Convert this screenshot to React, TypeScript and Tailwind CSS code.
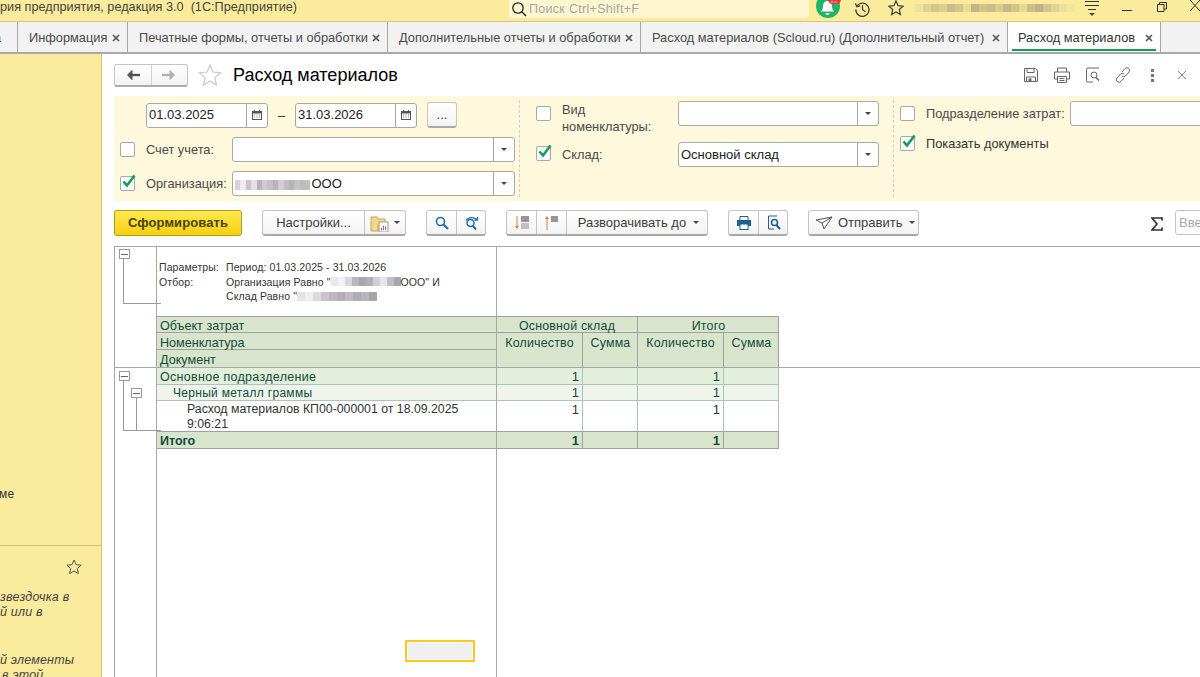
import type { ReactNode } from "react";

const font = "font-['Liberation_Sans',Arial,sans-serif]";

// pixelated patches where the reference has mosaic over names
function Mosaic({ colors, size = 5, height = 10 }: { colors: string[]; size?: number; height?: number }) {
  return (
    <span className="inline-flex align-middle">
      {colors.map((c, i) => (
        <span key={i} className="block" style={{ width: size, height, backgroundColor: c }} />
      ))}
    </span>
  );
}

function Check({ checked }: { checked?: boolean }) {
  return (
    <span className="relative block h-[15px] w-[15px] shrink-0 rounded-[2px] border border-[#a8a8a8] bg-white">
      {checked && (
        <svg viewBox="0 0 16 16" className="absolute left-[0px] top-[-4px] h-[16px] w-[16px]">
          <path d="M2.500 8.500 6 12.500 13.500 2.500" fill="none" stroke="#0f9d58" strokeWidth="2.600" />
        </svg>
      )}
    </span>
  );
}

function Caret() {
  return <span className="block h-0 w-0 border-x-[3.5px] border-t-[3.5px] border-x-transparent border-t-[#444]" />;
}

function TabClose() {
  return (
    <svg viewBox="0 0 8 8" className="mt-[4px] h-[8px] w-[8px] shrink-0">
      <path d="M1 1l6 6M7 1 1 7" stroke="#555" strokeWidth="1.700" />
    </svg>
  );
}

function Combo({ className, children }: { className: string; children?: ReactNode }) {
  return (
    <div className={`flex h-[25px] shrink-0 items-center rounded-[3px] border border-[#a8a8a8] bg-white ${className}`}>
      <div className="flex-1 overflow-hidden whitespace-nowrap pl-[2px] text-[13px] text-[#222]">{children}</div>
      <div className="flex h-full w-[21px] items-center justify-center border-l border-[#a8a8a8]">
        <Caret />
      </div>
    </div>
  );
}

function DateField({ value }: { value: string }) {
  return (
    <div className="flex h-[25px] w-[122px] shrink-0 items-center rounded-[3px] border border-[#a8a8a8] bg-white">
      <div className="flex-1 pl-[2px] text-[13px] leading-[14px] text-[#222]">{value}</div>
      <div className="flex h-full w-[21px] items-center justify-center border-l border-[#a8a8a8]">
        <svg viewBox="0 0 10 10" className="h-[10px] w-[10px]">
          <rect x="0.5" y="1.500" width="9" height="8" fill="#fff" stroke="#555" />
          <rect x="0.5" y="1.500" width="9" height="2" fill="#555" />
          <path d="M2.500 0v2M7.500 0v2" stroke="#555" />
          <path d="M2 5h1M4.500 5h1M7 5h1M2 7h1M4.500 7h1M7 7h1" stroke="#777" />
        </svg>
      </div>
    </div>
  );
}

function Btn({ className = "", children }: { className?: string; children: ReactNode }) {
  return (
    <div className={`flex h-[26px] shrink-0 items-center whitespace-nowrap rounded-[3px] border border-[#c4c4c4] border-b-[2px] border-b-[#a9a9a9] bg-gradient-to-b from-white to-[#f3f3f3] text-[13px] text-[#3c3c3c] ${className}`}>
      {children}
    </div>
  );
}

function Cell30({ children, last }: { children: ReactNode; last?: boolean }) {
  return (
    <div className={`flex h-full w-[30px] shrink-0 items-center justify-center ${last ? "" : "border-r border-[#c4c4c4]"}`}>{children}</div>
  );
}

function Minus({ className = "" }: { className?: string }) {
  return (
    <span className={`flex h-[10px] w-[11px] items-center justify-center border border-[#999] bg-white ${className}`}>
      <span className="block h-px w-[7px] bg-[#666]" />
    </span>
  );
}

const tabs = [
  { label: "Информация", width: 110 },
  { label: "Печатные формы, отчеты и обработки", width: 260 },
  { label: "Дополнительные отчеты и обработки", width: 253 },
  { label: "Расход материалов (Scloud.ru) (Дополнительный отчет)", width: 367 },
];

const blurA = ["#d8d3d8", "#f0eaec", "#c9c3cb", "#e6e0e2", "#b9b3bb", "#d0cbd0", "#c4c0c8", "#b8b4bc", "#d2ced4", "#c0bcc4", "#b4b4b8", "#c4c4c4", "#bcbcbc", "#c0c0c0"];
const blurB = ["#e8e8ea", "#f2f2f4", "#d8d8dc", "#b8b8bc", "#a8a8ae", "#b0b0b6", "#d0d0d4", "#e4e8ec", "#c0c0c4", "#a8a8ac"];
const blurC = ["#e4e4e4", "#eeeeee", "#dcdce0", "#c8c4c8", "#bcb8bc", "#b4b0b4", "#c0bcc0", "#b0acb0", "#b8b8bc", "#a8a4a8"];
const blurTop = ["#efe29a", "#e0d494", "#d2c68e", "#dccf92", "#c8bc8a", "#d2c68e", "#e8dc96", "#c2b688", "#d0c48c", "#c8bc8a", "#dacd90", "#c4b888", "#d0c48c", "#e4d894", "#cabe8a", "#bfb386", "#d2c68e", "#e0d494", "#ecdf98", "#f3e69a"];

const rows = [
  { key: "a", cls: "h-[17px] bg-[#e3eedd] leading-[18px] border-[#a9c5b8]" },
  { key: "b", cls: "h-[16px] bg-[#eff5ec] leading-[16px] border-[#a9c5b8]" },
  { key: "c", cls: "h-[31px] bg-white pt-px leading-[15px] text-[#333] border-r-[#a9c5b8] border-b-[#a0a0a0]" },
  { key: "d", cls: "h-[17px] bg-[#d8e4cc] leading-[17px] font-bold border-[#a0a0a0]" },
];

export default function App() {
  return (
    <div className={`relative flex h-[677px] w-[1200px] flex-col overflow-hidden bg-white ${font}`}>
      {/* title bar */}
      <div className="flex h-[22px] shrink-0 items-start border-b border-[#d9c677] bg-[#fbeb9c]">
        <div className="w-[509px] shrink-0 whitespace-pre text-[12.7px] leading-[15px] text-[#444]">
          {"рия предприятия, редакция 3.0  (1С:Предприятие)"}
        </div>
        <div className="flex h-[18px] w-[300px] shrink-0 items-center rounded-br-[4px] bg-[#fdf6cf] pl-[2px]">
          <svg viewBox="0 0 16 16" className="h-[16px] w-[16px]">
            <circle cx="7" cy="7" r="5.200" fill="none" stroke="#222" strokeWidth="1.300" />
            <path d="M11 11l4 4" stroke="#222" strokeWidth="1.500" />
          </svg>
          <span className="pl-[2px] text-[12.5px] tracking-[0.3px] text-[#a6a6a6]">Поиск Ctrl+Shift+F</span>
        </div>
        <div className="ml-[7px] h-[21px] w-[26px] shrink-0">
          <svg viewBox="0 0 26 21" className="h-[21px] w-[26px]">
            <circle cx="12" cy="6" r="12" fill="#22b268" />
            <path d="M11.500 1c3 0 4.500 2.500 4.500 5.500 0 2.500 1 3.500 2 5H5c1-1.500 2-2.500 2-5C7 3.500 8.500 1 11.500 1Z" fill="#fff" />
            <path d="M9.500 13h4a2 2 0 0 1-4 0Z" fill="#fff" />
            <rect x="12" y="-5" width="13" height="9" rx="4.500" fill="#e53935" />
            <path d="M15 2h2M18.500 2h2" stroke="#fff" strokeWidth="1.200" />
          </svg>
        </div>
        <div className="ml-[12px] flex h-[18px] shrink-0 items-center">
          <svg viewBox="0 0 18 18" className="h-[17px] w-[17px]">
            <path d="M3.500 5A7 7 0 1 1 2 9" fill="none" stroke="#3c3c3c" strokeWidth="1.300" />
            <path d="M1.500 2.500 3 6l3.500-.8" fill="none" stroke="#3c3c3c" strokeWidth="1.300" />
            <path d="M9 4.500V9l3 2.500" fill="none" stroke="#3c3c3c" strokeWidth="1.300" />
          </svg>
        </div>
        <div className="ml-[17px] flex h-[16px] shrink-0 items-center">
          <svg viewBox="0 0 16 16" className="h-[16px] w-[16px]">
            <path d="M8 1l2.100 4.700 5 .5-3.800 3.300 1.100 5L8 12l-4.400 2.500 1.100-5L.9 6.200l5-.5Z" fill="none" stroke="#3c3c3c" strokeWidth="1.200" />
          </svg>
        </div>
        <div className="ml-[11px] mt-[4px] flex shrink-0">
          <Mosaic colors={blurTop} size={8} height={8} />
        </div>
        <div className="ml-[10px] flex w-[14px] shrink-0 flex-col items-center gap-[3px] pt-[1px]">
          <span className="block h-px w-[14px] bg-[#333]" />
          <span className="block h-px w-[14px] bg-[#333]" />
          <span className="block h-px w-[8px] bg-[#333]" />
          <Caret />
        </div>
        <div className="ml-[23px] mt-[10px] h-px w-[10px] shrink-0 bg-[#333]" />
        <div className="ml-[25px] mt-[2px] h-[10px] w-[10px] shrink-0">
          <svg viewBox="0 0 10 10" className="h-[10px] w-[10px]">
            <path d="M2.500 2.500V.5h7v6.500H7M.5 2.500h6.500v7H.5Z" fill="none" stroke="#333" />
          </svg>
        </div>
        <div className="ml-[22px] h-[12px] w-[12px] shrink-0">
          <svg viewBox="0 0 12 12" className="h-[12px] w-[12px]">
            <path d="M1 0l10 11M11 0 1 11" stroke="#333" />
          </svg>
        </div>
      </div>

      {/* tabs */}
      <div className="flex h-[32px] shrink-0 border-b-2 border-[#a8a8a8] bg-[#f2f2f2] text-[12.8px] text-[#4a4a4a]">
        <div className="w-[18px] shrink-0 border-r border-[#a8a8a8] pt-[8px] leading-[15px]">
          <span className="ml-[-6px]">а</span>
        </div>
        {tabs.map((t) => (
          <div
            key={t.label}
            className="flex shrink-0 items-start justify-between whitespace-nowrap border-r border-[#a8a8a8] pl-[11px] pr-[7px] pt-[8px] leading-[15px]"
            style={{ width: t.width }}
          >
            <span>{t.label}</span>
            <TabClose />
          </div>
        ))}
        <div className="flex w-[153px] shrink-0 flex-col whitespace-nowrap border-r border-[#a8a8a8] bg-white pt-[8px] leading-[15px]">
          <div className="flex justify-between pl-[10px] pr-[7px] text-[#333]">
            <span>Расход материалов</span>
            <TabClose />
          </div>
          <div className="mx-[4px] mt-[4px] h-[2px] bg-[#0f9d58]" />
        </div>
      </div>

      <div className="flex min-h-0 flex-1">
        {/* side panel */}
        <aside className="flex w-[102px] shrink-0 flex-col overflow-hidden border-r border-[#d9c677] bg-[#fbeb9c] text-[12px] text-[#444]">
          <div className="h-[492px] shrink-0 border-b border-[#d0c27a] pt-[431px]">
            <span className="ml-[-1px] tracking-[0.3px] text-[#333]">ме</span>
          </div>
          <div className="flex justify-end pr-[19px] pt-[13px]">
            <svg viewBox="0 0 16 16" className="h-[16px] w-[16px]">
              <path d="M8 1l2.100 4.700 5 .5-3.800 3.300 1.100 5L8 12l-4.400 2.500 1.100-5L.9 6.200l5-.5Z" fill="none" stroke="#555" strokeWidth="1" />
            </svg>
          </div>
          <div className="whitespace-nowrap pt-[15px] text-[12.5px] italic leading-[15px] tracking-[0.2px]">
            <p>звездочка в</p>
            <p>й или в</p>
            <p className="pt-[33px]">й элементы</p>
            <p className="pl-[2px]">в этой</p>
          </div>
        </aside>

        <main className="flex min-w-0 flex-1 flex-col pl-[12px] text-[#222]">
          {/* form header */}
          <div className="flex h-[42px] shrink-0 items-center">
            <div className="flex h-[23px] w-[74px] shrink-0 rounded-[3px] border border-[#c4c4c4] border-b-[2px] border-b-[#a9a9a9] bg-gradient-to-b from-white to-[#f3f3f3]">
              <div className="flex flex-1 items-center justify-center border-r border-[#d0d0d0]">
                <svg viewBox="0 0 14 10" className="h-[10px] w-[14px]">
                  <path d="M6 .5 1.500 5 6 9.500Z" fill="#555" stroke="#555" />
                  <path d="M3 5h11" fill="none" stroke="#555" strokeWidth="2.400" />
                </svg>
              </div>
              <div className="flex flex-1 items-center justify-center">
                <svg viewBox="0 0 14 10" className="h-[10px] w-[14px]">
                  <path d="M8 .5 12.500 5 8 9.500Z" fill="#b0b0b0" stroke="#b0b0b0" />
                  <path d="M0 5h11" fill="none" stroke="#b0b0b0" strokeWidth="2.400" />
                </svg>
              </div>
            </div>
            <svg viewBox="0 0 24 24" className="ml-[10px] h-[24px] w-[24px] shrink-0">
              <path d="M12 2l3 7 7.500.7-5.700 4.900 1.700 7.300L12 18l-6.500 3.900 1.700-7.300L1.500 9.700 9 9Z" fill="none" stroke="#c8c8c8" strokeWidth="1.200" />
            </svg>
            <h1 className="ml-[11px] text-[18px] leading-none text-black">Расход материалов</h1>
            <div className="ml-auto flex items-center gap-[14px] pr-[14px]">
              <svg viewBox="0 0 16 16" className="h-[16px] w-[16px]">
                <path d="M1.500 1.500h11l2 2v11h-13Z" fill="none" stroke="#666" />
                <path d="M4 1.500v4h7v-4M3.500 15V10h9v5" fill="none" stroke="#666" />
                <rect x="5.500" y="11.500" width="3" height="3" fill="#666" />
              </svg>
              <svg viewBox="0 0 18 16" className="h-[16px] w-[18px]">
                <path d="M4.500 5V1h9v4M4.500 12H1.500V5h15v7h-3" fill="none" stroke="#666" />
                <path d="M4.500 9.500h9v6h-9ZM6.500 11.500h5M6.500 13.500h5" fill="none" stroke="#666" />
              </svg>
              <svg viewBox="0 0 16 16" className="h-[16px] w-[16px]">
                <path d="M14 1H3a1.500 1.500 0 0 0-1.500 1.500v11A1.500 1.500 0 0 0 3 15h5" fill="none" stroke="#666" />
                <circle cx="9" cy="8" r="3" fill="none" stroke="#666" />
                <path d="M11 10.500l3 3" stroke="#666" strokeWidth="1.500" />
              </svg>
              <svg viewBox="0 0 16 16" className="h-[16px] w-[16px]">
                <path d="M7 5l3-3.300a2.500 2.500 0 0 1 4 3.300l-3.500 4a2.500 2.500 0 0 1-3.500 0M9 11l-3 3.300a2.500 2.500 0 0 1-4-3.300l3.500-4a2.500 2.500 0 0 1 3.500 0" fill="none" stroke="#666" />
              </svg>
              <div className="ml-[4px] flex w-[6px] flex-col items-center gap-[2px]">
                <span className="block h-[3px] w-[3px] bg-[#777]" />
                <span className="block h-[3px] w-[3px] bg-[#777]" />
                <span className="block h-[3px] w-[3px] bg-[#777]" />
              </div>
              <svg viewBox="0 0 10 10" className="ml-[9px] h-[8px] w-[8px]">
                <path d="M0 0l10 10M10 0 0 10" stroke="#666" />
              </svg>
            </div>
          </div>

          {/* filter panel */}
          <div className="flex h-[105px] shrink-0 bg-[#fef8dc] text-[12.8px] leading-[15px] text-[#4a4a4a]">
            <div className="flex w-[405px] shrink-0 flex-col pl-[6px] pt-[6px]">
              <div className="flex items-center pl-[26px]">
                <DateField value="01.03.2025" />
                <span className="w-[27px] text-center text-[#333]">–</span>
                <DateField value="31.03.2026" />
                <Btn className="ml-[10px] w-[30px] justify-center leading-none">...</Btn>
              </div>
              <div className="mt-[9px] flex items-center">
                <Check />
                <span className="ml-[11px] w-[86px] shrink-0">Счет учета:</span>
                <Combo className="w-[283px]" />
              </div>
              <div className="mt-[9px] flex items-center">
                <Check checked />
                <span className="ml-[11px] w-[86px] shrink-0">Организация:</span>
                <Combo className="w-[283px]">
                  <Mosaic colors={blurA} size={5.4} />
                  <span className="ml-[1px]">ООО</span>
                </Combo>
              </div>
            </div>
            <div className="my-[4px] border-l border-dashed border-[#cfcfcf]" />
            <div className="flex w-[373px] shrink-0 flex-col pl-[16px] pt-[5px]">
              <div className="flex items-start">
                <span className="mt-[5px]"><Check /></span>
                <span className="ml-[11px] w-[116px] shrink-0 leading-[17px]">Вид номенклатуры:</span>
                <Combo className="w-[201px]" />
              </div>
              <div className="mt-[7px] flex items-center">
                <span className="mt-[-2px]"><Check checked /></span>
                <span className="ml-[11px] w-[116px] shrink-0">Склад:</span>
                <Combo className="w-[201px]">Основной склад</Combo>
              </div>
            </div>
            <div className="my-[4px] border-l border-dashed border-[#cfcfcf]" />
            <div className="flex flex-1 flex-col overflow-hidden pl-[6px] pt-[5px]">
              <div className="flex items-center whitespace-nowrap">
                <Check />
                <span className="ml-[11px] w-[144px] shrink-0">Подразделение затрат:</span>
                <div className="h-[25px] w-[140px] shrink-0 rounded-[3px] border border-[#a8a8a8] bg-white" />
              </div>
              <div className="mt-[10px] flex items-center">
                <Check checked />
                <span className="ml-[11px] text-[#333]">Показать документы</span>
              </div>
            </div>
          </div>

          {/* report toolbar */}
          <div className="flex h-[45px] shrink-0 items-start overflow-hidden pt-[9px]">
            <div className="flex h-[26px] w-[128px] shrink-0 items-center justify-center rounded-[3px] border border-[#b49b12] bg-gradient-to-b from-[#ffe94d] to-[#f6d000] text-[13px] font-bold tracking-[0.1px] text-[#4a4200]">
              Сформировать
            </div>
            <Btn className="ml-[20px] w-[144px]">
              <div className="flex h-full w-[102px] items-center justify-center border-r border-[#c4c4c4] pt-px">Настройки...</div>
              <div className="flex flex-1 items-center justify-center gap-[4px]">
                <svg viewBox="0 0 20 18" className="h-[18px] w-[20px]">
                  <path d="M1 3h6l1 2h7v6H8v6H1Z" fill="#f5d98a" stroke="#c9a24a" />
                  <rect x="9" y="8" width="9" height="10" fill="#fff" stroke="#999" />
                  <path d="M11.500 16v-2M13.500 16v-4M15.500 16v-3" stroke="#d4553a" />
                </svg>
                <Caret />
              </div>
            </Btn>
            <Btn className="ml-[20px] w-[60px]">
              <Cell30>
                <svg viewBox="0 0 14 14" className="h-[14px] w-[14px]">
                  <circle cx="5.500" cy="5.500" r="4" fill="none" stroke="#1f6fa8" strokeWidth="1.600" />
                  <path d="M8.500 8.500 13 13" stroke="#1f6fa8" strokeWidth="2.200" />
                </svg>
              </Cell30>
              <Cell30 last>
                <svg viewBox="0 0 16 14" className="h-[14px] w-[16px]">
                  <circle cx="6.500" cy="7" r="3.500" fill="none" stroke="#1f6fa8" strokeWidth="1.500" />
                  <path d="M9 10l3 3.500" stroke="#1f6fa8" strokeWidth="2" />
                  <path d="M2 4.500C4 1 9 .5 13 3.500M13.500 1v3h-3" fill="none" stroke="#1f6fa8" strokeWidth="1.300" />
                </svg>
              </Cell30>
            </Btn>
            <Btn className="ml-[20px] w-[202px]">
              <Cell30>
                <svg viewBox="0 0 16 16" className="h-[16px] w-[16px]">
                  <path d="M3 1v12" stroke="#e57b3a" />
                  <path d="M1 11l2 3 2-3Z" fill="#e57b3a" />
                  <path d="M7 2h8M7 4h8M7 6h8" stroke="#333" />
                  <path d="M7 9h8M7 11h8M7 13h8" stroke="#888" />
                </svg>
              </Cell30>
              <Cell30>
                <svg viewBox="0 0 16 16" className="h-[16px] w-[16px]">
                  <path d="M3 3v12" stroke="#e57b3a" />
                  <path d="M1 4l2-3 2 3Z" fill="#e57b3a" />
                  <path d="M7 2h7M7 4h7M7 6h7" stroke="#333" />
                </svg>
              </Cell30>
              <div className="flex flex-1 items-center justify-center gap-[7px] pl-[3px]">
                <span className="pt-px">Разворачивать до</span>
                <Caret />
              </div>
            </Btn>
            <Btn className="ml-[20px] w-[60px]">
              <Cell30>
                <svg viewBox="0 0 16 14" className="h-[14px] w-[16px]">
                  <path d="M4 4V.5h8V4" fill="none" stroke="#1f5f8f" />
                  <rect x="1" y="4" width="14" height="6" fill="#1f5f8f" />
                  <rect x="4" y="8" width="8" height="5.500" fill="#fff" stroke="#1f5f8f" />
                </svg>
              </Cell30>
              <Cell30 last>
                <svg viewBox="0 0 14 15" className="h-[15px] w-[14px]">
                  <path d="M10 1H1.500v13H7" fill="none" stroke="#1f5f8f" />
                  <circle cx="7.500" cy="7.500" r="3" fill="none" stroke="#1f5f8f" strokeWidth="1.600" />
                  <path d="M9.500 10l3.500 4" stroke="#1f5f8f" strokeWidth="2" />
                </svg>
              </Cell30>
            </Btn>
            <Btn className="ml-[20px] w-[111px] pl-[6px]">
              <svg viewBox="0 0 18 14" className="h-[14px] w-[18px]">
                <path d="M1 4 17 1 9 13 7 7Zm6 3 10-6" fill="none" stroke="#555" />
              </svg>
              <span className="ml-[5px] pt-px">Отправить</span>
              <span className="ml-[7px]"><Caret /></span>
            </Btn>
            <svg viewBox="0 0 12 14" className="ml-[232px] mt-[7px] h-[14px] w-[12px] shrink-0">
              <path d="M11 3.500V1H1l5 6-5 6h10v-2.500" fill="none" stroke="#333" strokeWidth="1.700" />
            </svg>
            <div className="ml-[12px] h-[25px] w-[60px] shrink-0 rounded-[3px] border border-[#c4c4c4] pl-[3px] text-[13px] leading-[23px] text-[#aaa]">
              Введите
            </div>
          </div>

          {/* report: frozen panes */}
          <div className="flex min-h-0 flex-1 flex-col border-l border-t border-[#a8a8a8]">
            <div className="flex h-[121px] shrink-0 border-b border-[#a8a8a8]">
              <div className="flex w-[382px] shrink-0 border-r border-[#a8a8a8]">
                <div className="w-[42px] shrink-0 border-r border-[#a8a8a8] pl-[4px] pt-[2px]">
                  <Minus />
                  <div className="ml-[4px] h-[45px] w-[38px] border-b border-l border-[#999]" />
                </div>
                <div className="flex-1">
                  <div className="h-[69px] pt-[13px] text-[10.5px] leading-[14.5px] tracking-[0.1px] text-[#333]">
                    <div className="flex pl-[2px]">
                      <span className="w-[67px]">Параметры:</span>
                      <span>Период: 01.03.2025 - 31.03.2026</span>
                    </div>
                    <div className="flex pl-[2px]">
                      <span className="w-[67px]">Отбор:</span>
                      <div>
                        <div className="flex items-center">
                          Организация Равно "<Mosaic colors={blurB} size={7} height={9} />ООО" И
                        </div>
                        <div className="flex items-center">
                          Склад Равно "<Mosaic colors={blurC} size={8} height={9} />
                        </div>
                      </div>
                    </div>
                  </div>
                  <div className="text-[12.6px] text-[#0f4c3a]">
                    <div className="h-[17px] border-y border-[#a0a0a0] bg-[#d8e4cc] pl-[3px] leading-[18px]">Объект затрат</div>
                    <div className="h-[17px] border-b border-[#a0a0a0] bg-[#d8e4cc] pl-[3px] leading-[20px]">Номенклатура</div>
                    <div className="h-[17px] bg-[#d8e4cc] pl-[3px] leading-[21px]">Документ</div>
                  </div>
                </div>
              </div>
              <div className="flex-1 pt-[69px]">
                <div className="grid w-[282px] grid-cols-[141px_141px] border-r border-t border-[#a0a0a0] bg-[#d8e4cc] text-center text-[12.4px] tracking-[0.2px] text-[#0f4c3a]">
                  <div className="h-[16px] border-b border-r border-[#a0a0a0] leading-[19px]">Основной склад</div>
                  <div className="h-[16px] border-b border-[#a0a0a0] leading-[19px]">Итого</div>
                  <div className="grid h-[34px] grid-cols-[86px_55px] border-r border-[#a0a0a0] leading-[20px]">
                    <div className="border-r border-[#a0a0a0]">Количество</div>
                    <div>Сумма</div>
                  </div>
                  <div className="grid h-[34px] grid-cols-[86px_55px] leading-[20px]">
                    <div className="border-r border-[#a0a0a0]">Количество</div>
                    <div>Сумма</div>
                  </div>
                </div>
              </div>
            </div>

            <div className="flex min-h-0 flex-1">
              <div className="flex w-[382px] shrink-0 border-r border-[#a8a8a8]">
                <div className="w-[42px] shrink-0 border-r border-[#a8a8a8] pl-[4px] pt-[3px]">
                  <Minus />
                  <div className="ml-[4px] flex h-[50px] w-[38px] items-start border-b border-l border-[#999]">
                    <div className="ml-[7px] mt-[7px] flex flex-col items-start">
                      <Minus />
                      <div className="ml-[5px] h-[33px] w-px bg-[#999]" />
                    </div>
                  </div>
                </div>
                <div className="flex-1">
                  <div className="h-[17px] border-b border-[#a9c5b8] bg-[#e3eedd] pl-[3px] text-[12.5px] leading-[18px] tracking-[0.3px] text-[#0f4c3a]">Основное подразделение</div>
                  <div className="h-[16px] border-b border-[#a9c5b8] bg-[#eff5ec] pl-[16px] text-[12px] leading-[16px] tracking-[0.3px] text-[#0f4c3a]">Черный металл граммы</div>
                  <div className="h-[31px] border-b border-[#a0a0a0] pl-[30px] pr-[8px] pt-px text-[12.3px] leading-[14.5px] text-[#333]">Расход материалов КП00-000001 от 18.09.2025 9:06:21</div>
                  <div className="h-[17px] border-b border-[#a0a0a0] bg-[#d8e4cc] pl-[3px] text-[12.5px] font-bold leading-[19px] text-[#0f4c3a]">Итого</div>
                </div>
              </div>
              <div className="flex-1">
                <div className="grid w-[282px] grid-cols-[86px_55px_86px_55px] text-right text-[13px] text-[#0f4c3a]">
                  {rows.flatMap((row) =>
                    [0, 1, 2, 3].map((col) => (
                      <div key={`${row.key}-${col}`} className={`border-b border-r pr-[3px] ${row.cls}`}>
                        {col % 2 === 0 ? "1" : ""}
                      </div>
                    )),
                  )}
                </div>
              </div>
            </div>
          </div>
        </main>
      </div>

      {/* active cell frame, over the report */}
      <div className="absolute left-[405px] top-[640px] h-[22px] w-[70px] border-2 border-[#f7cb1b] bg-[#f0f0f0] outline outline-1 -outline-offset-3 outline-white" />
    </div>
  );
}
